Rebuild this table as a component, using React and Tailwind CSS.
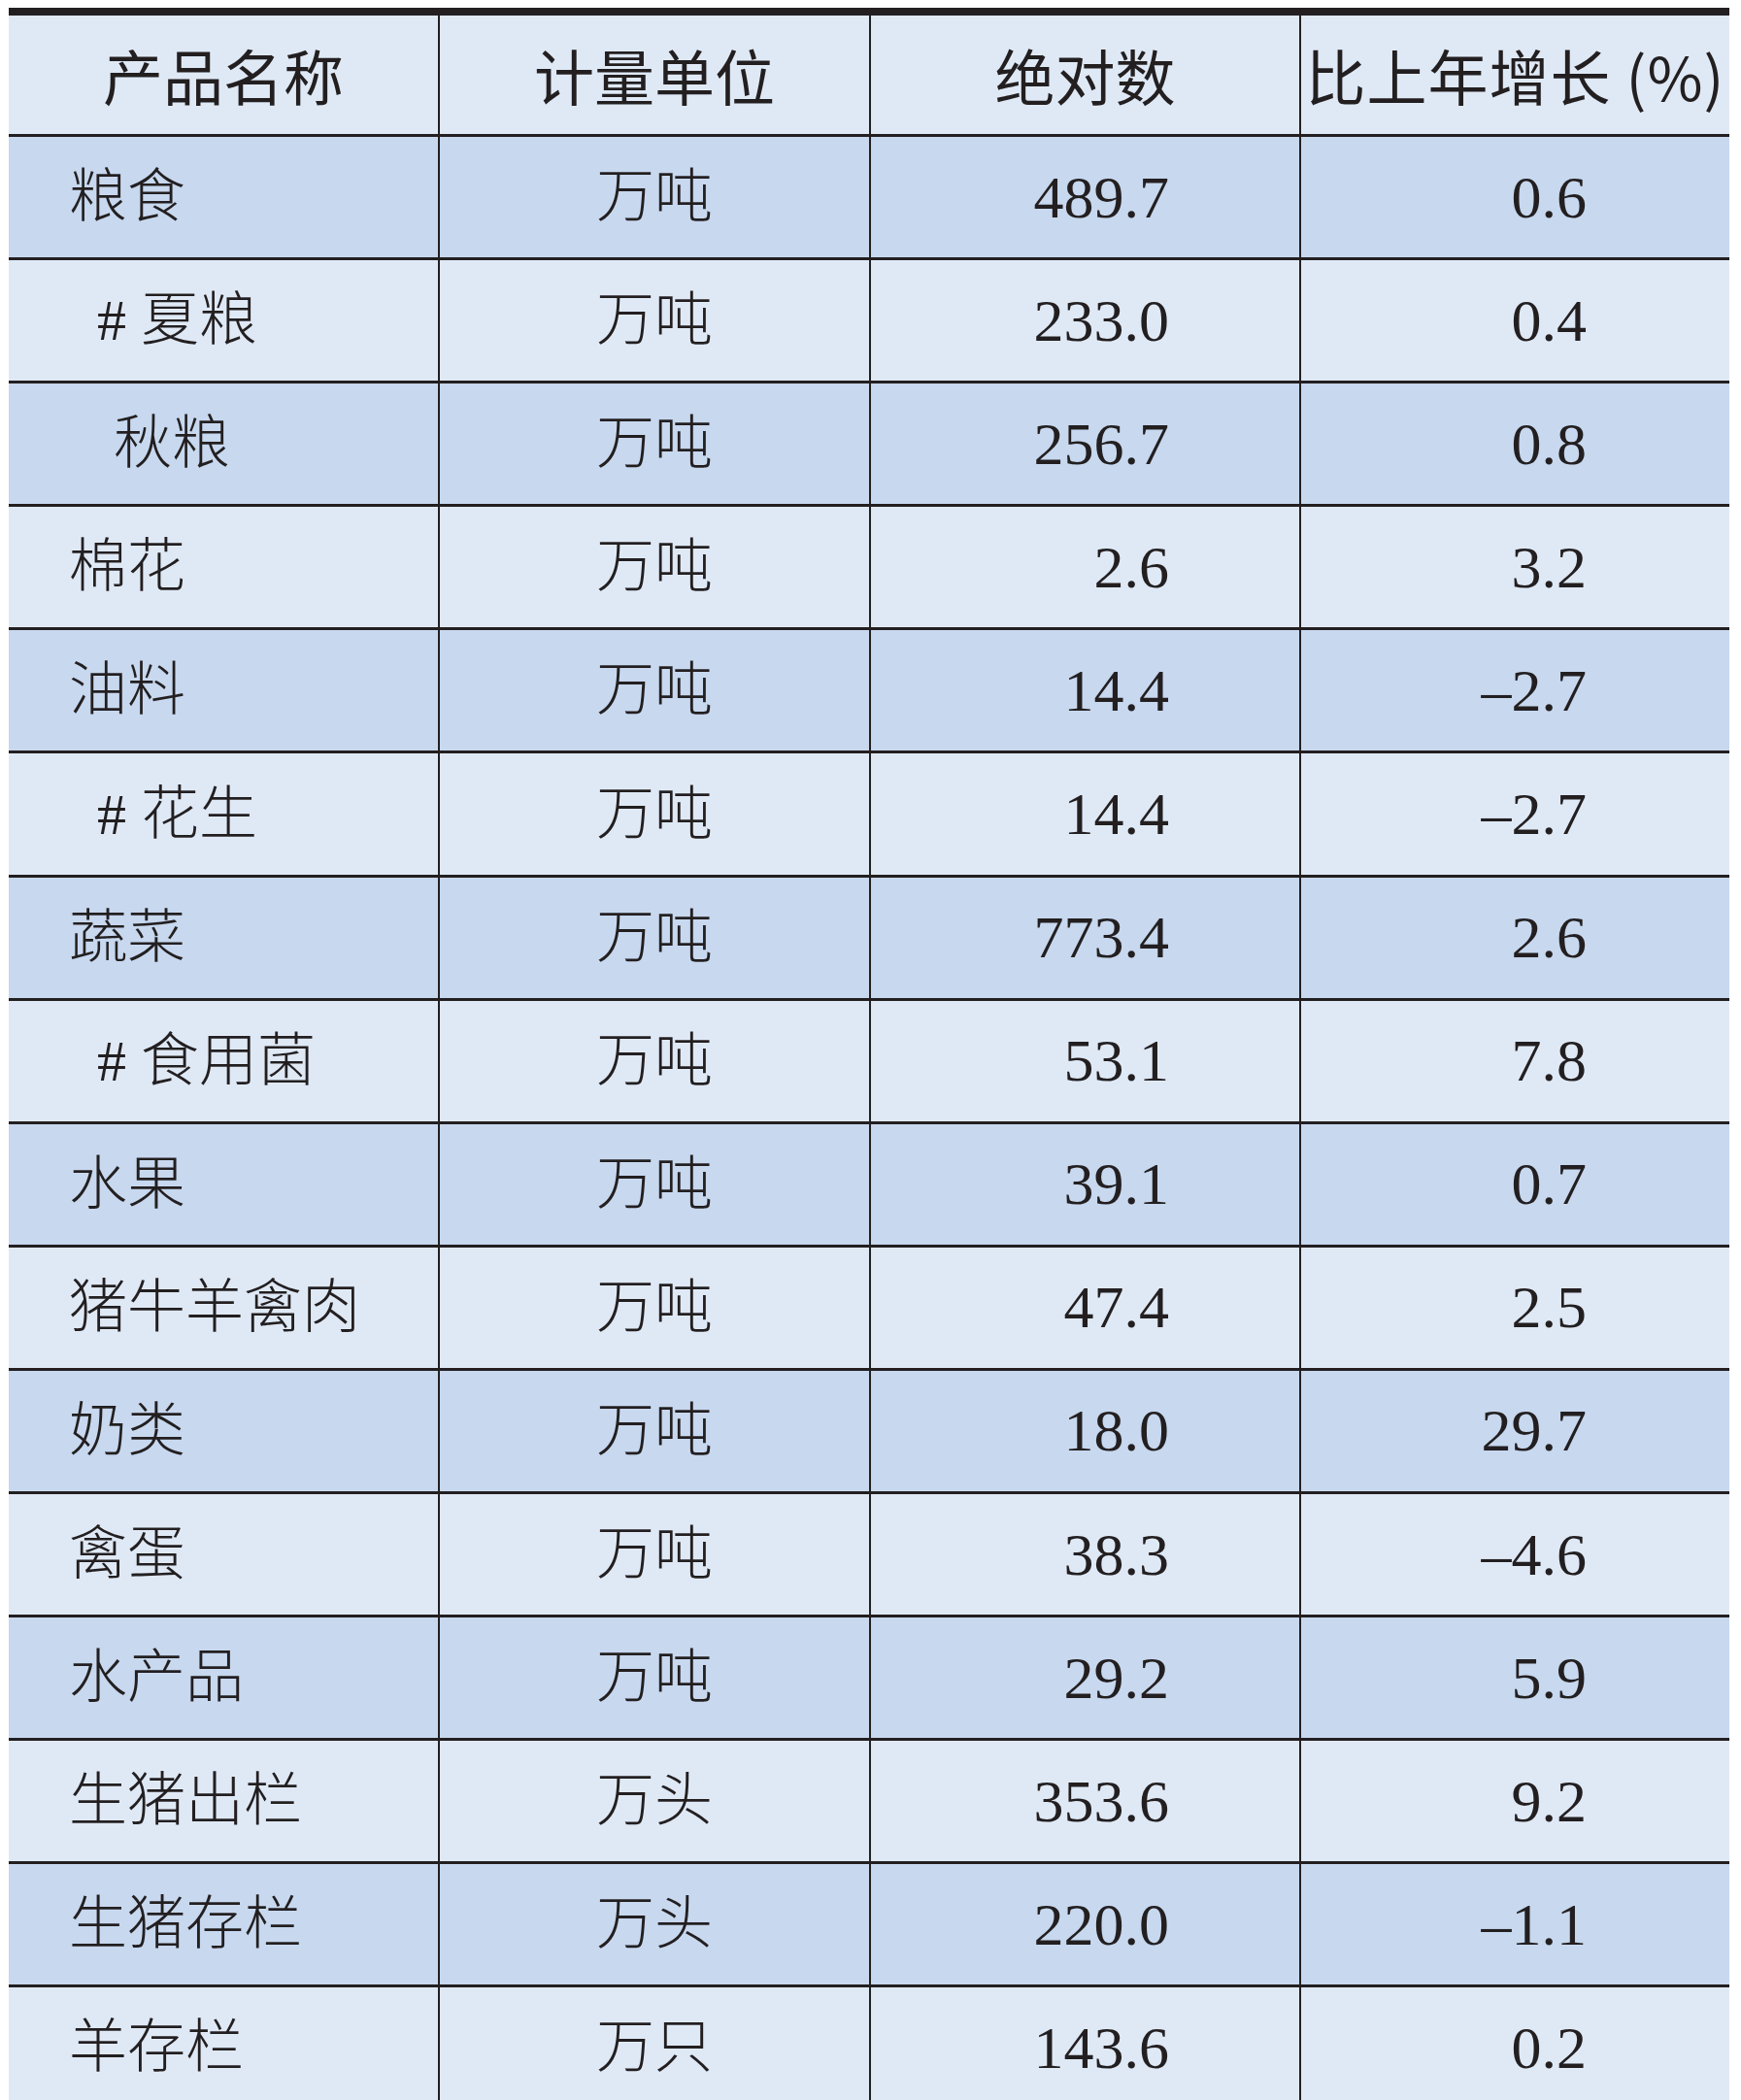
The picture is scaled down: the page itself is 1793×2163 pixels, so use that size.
import React from "react";

const rows = [
  { name: "粮食", indent: "pl-[62px]", unit: "万吨", abs: "489.7", pct: "0.6" },
  { name: "# 夏粮", indent: "pl-[91px]", unit: "万吨", abs: "233.0", pct: "0.4" },
  { name: "秋粮", indent: "pl-[108px]", unit: "万吨", abs: "256.7", pct: "0.8" },
  { name: "棉花", indent: "pl-[62px]", unit: "万吨", abs: "2.6", pct: "3.2" },
  { name: "油料", indent: "pl-[62px]", unit: "万吨", abs: "14.4", pct: "–2.7" },
  { name: "# 花生", indent: "pl-[91px]", unit: "万吨", abs: "14.4", pct: "–2.7" },
  { name: "蔬菜", indent: "pl-[62px]", unit: "万吨", abs: "773.4", pct: "2.6" },
  { name: "# 食用菌", indent: "pl-[91px]", unit: "万吨", abs: "53.1", pct: "7.8" },
  { name: "水果", indent: "pl-[62px]", unit: "万吨", abs: "39.1", pct: "0.7" },
  { name: "猪牛羊禽肉", indent: "pl-[62px]", unit: "万吨", abs: "47.4", pct: "2.5" },
  { name: "奶类", indent: "pl-[62px]", unit: "万吨", abs: "18.0", pct: "29.7" },
  { name: "禽蛋", indent: "pl-[62px]", unit: "万吨", abs: "38.3", pct: "–4.6" },
  { name: "水产品", indent: "pl-[62px]", unit: "万吨", abs: "29.2", pct: "5.9" },
  { name: "生猪出栏", indent: "pl-[62px]", unit: "万头", abs: "353.6", pct: "9.2" },
  { name: "生猪存栏", indent: "pl-[62px]", unit: "万头", abs: "220.0", pct: "–1.1" },
  { name: "羊存栏", indent: "pl-[62px]", unit: "万只", abs: "143.6", pct: "0.2" },
];

const grid = "grid grid-cols-[442px_444px_443px_443px]";
const body = "font-['Liberation_Serif','Noto_Sans_CJK_SC',serif] font-light text-[60px] text-[#231f20]";

export default function App() {
  return (
    <div className="min-h-screen bg-white pt-[8px] pl-[9px]">
      <div className="w-[1772px]">
        {/* header */}
        <div className={`${grid} h-[130px] border-t-[8px] border-[#231f20] bg-[#dfe9f6] font-['Noto_Sans_CJK_SC',sans-serif] text-[62px] text-[#231f20]`}>
          <div className="flex items-center justify-center">产品名称</div>
          <div className="flex items-center justify-center border-l-2 border-[#231f20]">计量单位</div>
          <div className="flex items-center justify-center border-l-2 border-[#231f20]">绝对数</div>
          <div className="flex items-center justify-center whitespace-nowrap border-l-2 border-[#231f20] tracking-[1px]">
            比上年增长 (%)
          </div>
        </div>

        {rows.map((r, i) => (
          <div
            key={i}
            className={`${grid} ${body} h-[127.1px] border-t-[3px] border-[#231f20] ${
              i % 2 === 0 ? "bg-[#c7d8ef]" : "bg-[#dfe9f6]"
            }`}
          >
            <div className={`flex items-center whitespace-nowrap ${r.indent}`}>{r.name}</div>
            <div className="flex items-center justify-center border-l-2 border-[#231f20]">{r.unit}</div>
            <div className="flex items-center justify-end border-l-2 border-[#231f20] pr-[134px] text-[62px]">
              {r.abs}
            </div>
            <div className="flex items-center justify-end border-l-2 border-[#231f20] pr-[147px] text-[62px]">
              {r.pct}
            </div>
          </div>
        ))}
      </div>
    </div>
  );
}
